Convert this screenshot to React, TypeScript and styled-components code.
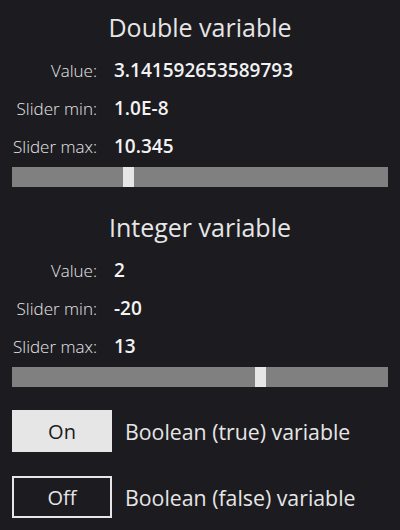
import styled, { createGlobalStyle } from 'styled-components'

const GlobalStyle = createGlobalStyle`
  html, body {
    margin: 0;
    padding: 0;
    background: #1c1b20;
  }
  body {
    font-family: 'Open Sans', 'Noto Sans', sans-serif;
    color: #e6e6e6;
  }
`

type NumberVar = {
  title: string
  value: number
  display: string
  min: string
  max: string
  minValue: number
  maxValue: number
}

const numberVars: NumberVar[] = [
  {
    title: 'Double variable',
    value: Math.PI,
    display: '3.141592653589793',
    min: '1.0E-8',
    max: '10.345',
    minValue: 1e-8,
    maxValue: 10.345,
  },
  {
    title: 'Integer variable',
    value: 2,
    display: '2',
    min: '-20',
    max: '13',
    minValue: -20,
    maxValue: 13,
  },
]

const TRACK_WIDTH = 376
const THUMB_WIDTH = 11

export default function App() {
  return (
    <Page>
      <GlobalStyle />
      {numberVars.map((v, i) => {
        const ratio = (v.value - v.minValue) / (v.maxValue - v.minValue)
        return (
          <Section key={v.title} $first={i === 0}>
            <Title>{v.title}</Title>
            <Fields>
              <Label>Value:</Label>
              <Value>{v.display}</Value>
              <Label>Slider min:</Label>
              <Value>{v.min}</Value>
              <Label>Slider max:</Label>
              <Value>{v.max}</Value>
            </Fields>
            <Track>
              <Thumb style={{ left: ratio * (TRACK_WIDTH - THUMB_WIDTH) }} />
            </Track>
          </Section>
        )
      })}
      <Toggles>
        <ToggleRow>
          <ToggleButton $on>On</ToggleButton>
          <ToggleLabel>Boolean (true) variable</ToggleLabel>
        </ToggleRow>
        <ToggleRow>
          <ToggleButton $on={false}>Off</ToggleButton>
          <ToggleLabel>Boolean (false) variable</ToggleLabel>
        </ToggleRow>
      </Toggles>
    </Page>
  )
}

const Page = styled.div`
  width: 400px;
  height: 530px;
  box-sizing: border-box;
  padding: 7px 12px 0;
  display: flex;
  flex-direction: column;
`

const Section = styled.section<{ $first: boolean }>`
  display: flex;
  flex-direction: column;
  margin-top: ${(p) => (p.$first ? '0' : '20px')};
`

const Title = styled.h2`
  margin: 0 0 4px;
  height: 40px;
  line-height: 40px;
  text-align: center;
  font-size: 25px;
  font-weight: 400;
  color: #e6e6e6;
`

const Fields = styled.div`
  display: grid;
  grid-template-columns: 85px 1fr;
  grid-auto-rows: 38px;
  column-gap: 17px;
  align-items: center;
`

const Label = styled.span`
  text-align: right;
  font-size: 17px;
  font-weight: 300;
  color: #e6e6e6;
  white-space: nowrap;
`

const Value = styled.span`
  font-size: 19px;
  font-weight: 600;
  color: #f2f2f2;
`

const Track = styled.div`
  position: relative;
  margin-top: 2px;
  height: 20px;
  width: ${TRACK_WIDTH}px;
  background: #808080;
`

const Thumb = styled.div`
  position: absolute;
  top: 0;
  width: ${THUMB_WIDTH}px;
  height: 100%;
  background: #e6e6e6;
`

const Toggles = styled.div`
  display: flex;
  flex-direction: column;
  gap: 24px;
  margin-top: 23px;
`

const ToggleRow = styled.div`
  display: flex;
  align-items: center;
  gap: 13px;
`

const ToggleButton = styled.button<{ $on: boolean }>`
  box-sizing: border-box;
  width: 100px;
  height: 42px;
  padding: 0;
  font-family: inherit;
  font-size: 20px;
  font-weight: 400;
  border: 2px solid #e6e6e6;
  background: ${(p) => (p.$on ? '#e6e6e6' : 'transparent')};
  color: ${(p) => (p.$on ? '#1c1b20' : '#e6e6e6')};
`

const ToggleLabel = styled.span`
  font-size: 21.3px;
  color: #e6e6e6;
  white-space: nowrap;
`
